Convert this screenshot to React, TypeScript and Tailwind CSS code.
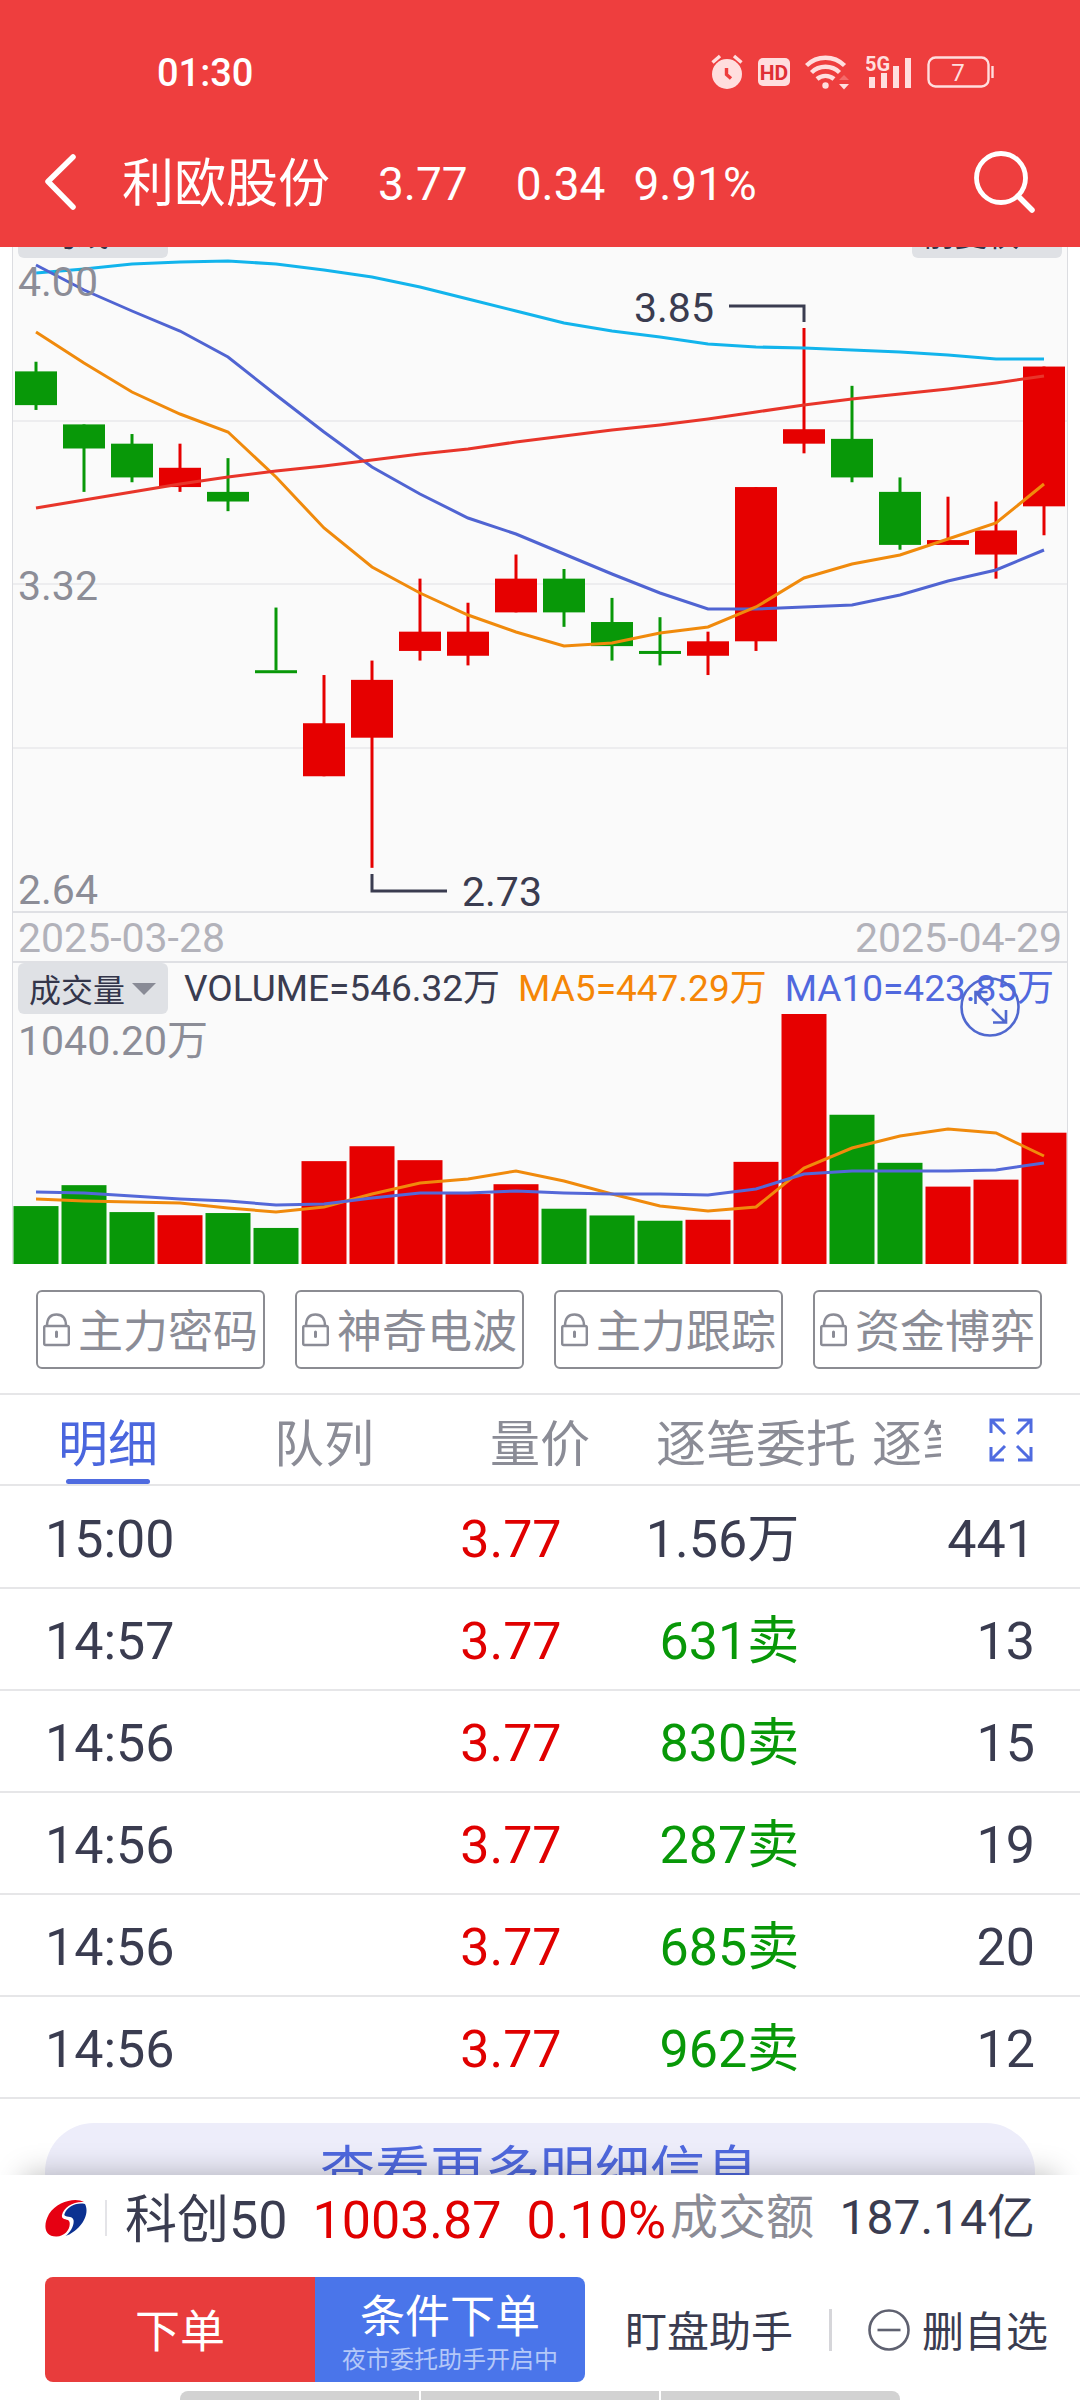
import { useState } from "react";

const UP = "#e60000";
const DOWN = "#089808";

// open, close, high, low, volume (万)
const candles = [
  [3.76, 3.69, 3.78, 3.68, 241],
  [3.65, 3.6, 3.65, 3.51, 328],
  [3.61, 3.54, 3.63, 3.53, 216],
  [3.52, 3.56, 3.61, 3.51, 203],
  [3.51, 3.49, 3.58, 3.47, 212],
  [3.14, 3.14, 3.27, 3.14, 150],
  [2.92, 3.03, 3.13, 2.92, 428],
  [3.0, 3.12, 3.16, 2.73, 490],
  [3.18, 3.22, 3.33, 3.16, 432],
  [3.17, 3.22, 3.28, 3.15, 291],
  [3.26, 3.33, 3.38, 3.26, 332],
  [3.33, 3.26, 3.35, 3.23, 230],
  [3.24, 3.19, 3.29, 3.16, 202],
  [3.18, 3.18, 3.25, 3.15, 180],
  [3.17, 3.2, 3.22, 3.13, 184],
  [3.2, 3.52, 3.52, 3.18, 425],
  [3.61, 3.64, 3.85, 3.59, 1040.2],
  [3.62, 3.54, 3.73, 3.53, 621],
  [3.51, 3.4, 3.54, 3.39, 421],
  [3.4, 3.41, 3.5, 3.4, 322],
  [3.38, 3.43, 3.49, 3.33, 351],
  [3.48, 3.77, 3.77, 3.42, 546.32],
];
const falling = [0, 1, 2, 4, 5, 11, 12, 13, 17, 18];

const priceLines = [
  {
    color: "#12b4ec",
    ys: [26, 22, 17, 15, 14, 17, 23, 30, 40, 52, 64, 76, 84, 90, 97, 100, 101, 103, 105, 108, 112, 112],
  },
  {
    color: "#5064d2",
    ys: [18, 43, 64, 84, 110, 148, 185, 220, 247, 271, 287, 307, 327, 346, 362, 362, 360, 358, 348, 334, 323, 303],
  },
  {
    color: "#f08a0c",
    ys: [85, 116, 145, 167, 185, 230, 281, 320, 346, 368, 385, 399, 396, 386, 380, 360, 331, 317, 308, 292, 276, 237],
  },
  {
    color: "#e8352a",
    ys: [261, 253, 245, 237, 230, 224, 219, 213, 207, 202, 195, 189, 183, 178, 172, 165, 158, 152, 147, 142, 136, 129],
  },
];

const volumeLines = [
  {
    color: "#f08a0c",
    ys: [185, 187, 188, 189, 194, 198, 193, 180, 169, 165, 157, 167, 180, 192, 197, 193, 154, 134, 122, 115, 119, 142],
  },
  {
    color: "#5468d8",
    ys: [178, 179, 182, 185, 187, 191, 190, 184, 179, 179, 177, 179, 180, 180, 181, 175, 160, 157, 157, 157, 156, 149],
  },
];

const tabs = ["明细", "队列", "量价", "逐笔委托", "逐笔成交"];
const locked = ["主力密码", "神奇电波", "主力跟踪", "资金博弈"];

const trades = [
  { time: "15:00", price: "3.77", volume: "1.56万", side: "", count: 441 },
  { time: "14:57", price: "3.77", volume: "631卖", side: "sell", count: 13 },
  { time: "14:56", price: "3.77", volume: "830卖", side: "sell", count: 15 },
  { time: "14:56", price: "3.77", volume: "287卖", side: "sell", count: 19 },
  { time: "14:56", price: "3.77", volume: "685卖", side: "sell", count: 20 },
  { time: "14:56", price: "3.77", volume: "962卖", side: "sell", count: 12 },
];

const cx = (i: number) => 23 + i * 48;
const py = (price: number) => 81 + (3.85 - price) * 482;
const toPoints = (ys: number[]) => ys.map((y, i) => `${cx(i)},${y}`).join(" ");

function StatusIcons() {
  return (
    <div className="flex items-center gap-[15px]">
      <svg className="h-[36px] w-[32px]" viewBox="0 0 32 36" fill="none">
        <circle cx="16" cy="20" r="15" fill="#ffdede" />
        <path d="M1.5 8.5 9 2M30.5 8.5 23 2" stroke="#ffdede" strokeWidth="3.4" />
        <path d="M15.5 14v6.5l4.5 4" stroke="#ee3e3e" strokeWidth="3.4" />
      </svg>
      <svg className="h-[30px] w-[32px]" viewBox="0 0 32 30">
        <rect y="1" width="32" height="28" rx="5" fill="#ffdede" />
        <text x="16" y="23" textAnchor="middle" fontSize="21" fontWeight="700" fill="#e02f35" fontFamily="Roboto, sans-serif">
          HD
        </text>
      </svg>
      <svg className="h-[36px] w-[46px]" viewBox="0 0 46 36" fill="none" stroke="#ffdede" strokeWidth="4.4">
        <path d="M1.5 11.5a27 27 0 0 1 38 0" />
        <path d="M6.5 18.5a20 20 0 0 1 28 0" />
        <path d="M12 25a13 13 0 0 1 17 0" />
        <circle cx="20.5" cy="31.5" r="3.2" fill="#ffdede" stroke="none" />
        <path d="M34 30h10l-5 5.5z" fill="#ffdede" stroke="none" />
        <path d="M34 26h10l-5-5z" fill="#f46a6a" stroke="none" />
      </svg>
      <svg className="h-[36px] w-[46px]" viewBox="0 0 46 36" fill="#ffdede">
        <text x="-1" y="17" fontSize="20" fontWeight="700" fontFamily="Roboto, sans-serif">
          5G
        </text>
        <rect x="3" y="23" width="6" height="11" />
        <rect x="15" y="19" width="6" height="15" />
        <rect x="27" y="12" width="6" height="22" />
        <rect x="39" y="4" width="6" height="30" />
      </svg>
      <svg className="h-[32px] w-[67px]" viewBox="0 0 67 32" fill="none">
        <rect x="1.5" y="1.5" width="60" height="29" rx="7" stroke="#ffdede" strokeWidth="2.4" />
        <path d="M65.5 10v12" stroke="#ffdede" strokeWidth="2.4" />
        <text x="31" y="24.5" textAnchor="middle" fontSize="24" fill="#ffdede" fontFamily="Roboto, sans-serif">
          7
        </text>
      </svg>
    </div>
  );
}

function LockIcon() {
  return (
    <svg className="h-[34px] w-[27px] shrink-0" viewBox="0 0 27 34" fill="none" stroke="#8b8c96" strokeWidth="2.4">
      <rect x="1.2" y="13" width="24.6" height="19" rx="1.5" />
      <path d="M4 13C4 5 8 1.5 13.5 1.5S23 5 23 13" />
      <path d="M13.5 19v4.5" strokeWidth="3" strokeLinecap="round" />
    </svg>
  );
}

function PriceChart() {
  return (
    <svg className="block w-full" viewBox="0 0 1054 664" fill="none">
      {[174, 337, 501].map((y) => (
        <path key={y} d={`M0 ${y}H1054`} stroke="#ededef" strokeWidth="2" />
      ))}
      {candles.map(([open, close, high, low], i) => {
        const color = falling.includes(i) ? DOWN : UP;
        const top = py(Math.max(open, close));
        const height = Math.max(3, py(Math.min(open, close)) - top);
        return (
          <g key={i} fill={color}>
            <rect x={cx(i) - 1.5} y={py(high)} width="3" height={py(low) - py(high)} />
            <rect x={cx(i) - 21} y={top} width="42" height={height} />
          </g>
        );
      })}
      {priceLines.map((line) => (
        <polyline key={line.color} points={toPoints(line.ys)} stroke={line.color} strokeWidth="3" />
      ))}
      <path d="M716 59h75v16" stroke="#3a3c50" strokeWidth="3" />
      <path d="M359 627v17h75" stroke="#3a3c50" strokeWidth="3" />
      <g fontSize="41" fill="#3a3c50" fontFamily="Roboto, sans-serif">
        <text x="621" y="75">3.85</text>
        <text x="449" y="659">2.73</text>
      </g>
    </svg>
  );
}

function VolumeChart() {
  return (
    <svg className="block w-full" viewBox="0 0 1054 250" fill="none">
      {candles.map((c, i) => {
        const height = (c[4] / 1040.2) * 250;
        return (
          <rect
            key={i}
            x={cx(i) - 22.5}
            y={250 - height}
            width="45"
            height={height}
            fill={falling.includes(i) ? DOWN : UP}
          />
        );
      })}
      {volumeLines.map((line) => (
        <polyline key={line.color} points={toPoints(line.ys)} stroke={line.color} strokeWidth="3" />
      ))}
    </svg>
  );
}

function Chip({ label }: { label: string }) {
  return (
    <button
      type="button"
      className="flex h-[51px] w-[150px] shrink-0 items-center justify-between rounded-md bg-[#dfe1e5] pr-3 pl-1 text-[32px] leading-none text-[#33354a]"
    >
      <span className="flex-1 pt-1 text-center">{label}</span>
      <svg className="h-[12px] w-[24px]" viewBox="0 0 24 12">
        <path d="M0 0h24L12 12z" fill="#898b96" />
      </svg>
    </button>
  );
}

export default function App() {
  const [activeTab, setActiveTab] = useState("明细");

  return (
    <div className="flex h-screen flex-col overflow-hidden bg-white font-[Roboto,'Noto_Sans_CJK_SC',sans-serif] text-[#3a3c50]">
      <header className="shrink-0 bg-[#ee3e3e] pb-[27px] text-white">
        <div className="flex h-36 items-center justify-between pr-[86px] pl-[157px]">
          <span className="pt-[2px] text-[38px] leading-none font-medium">01:30</span>
          <StatusIcons />
        </div>
        <div className="flex h-[76px] items-center pr-11 pl-[42px] text-[46px] leading-none">
          <button type="button" aria-label="返回" className="mr-11">
            <svg className="h-[56px] w-[36px]" viewBox="0 0 36 56" fill="none" stroke="white" strokeWidth="5.5" strokeLinecap="round" strokeLinejoin="round">
              <path d="M31 3 6 27.5 31 53" />
            </svg>
          </button>
          <h1 className="pt-[6px] text-[52px] leading-none">利欧股份</h1>
          <span className="ml-12 pt-1">3.77</span>
          <span className="ml-12 pt-1">0.34</span>
          <span className="ml-7 pt-1">9.91%</span>
          <button type="button" aria-label="搜索" className="ml-auto">
            <svg className="h-[62px] w-[62px]" viewBox="0 0 62 62" fill="none" stroke="white" strokeWidth="4.8" strokeLinecap="round">
              <circle cx="27" cy="27" r="24.5" />
              <path d="m44 45 14 14" strokeWidth="5.5" />
            </svg>
          </button>
        </div>
      </header>

      <main className="min-h-0 flex-1 overflow-hidden">
        <section className="mx-3 border-x border-[#dcdde1] bg-[#fafafa]">
          <div className="relative">
            <PriceChart />
            <div className="absolute inset-x-[5px] -top-10 flex justify-between">
              <Chip label="均线" />
              <Chip label="前复权" />
            </div>
            <div className="pointer-events-none absolute inset-0 flex flex-col justify-between px-[5px] pt-[14px] text-[41px] leading-[42px] text-[#8c8d97]">
              <span>4.00</span>
              <span>3.32</span>
              <span>2.64</span>
            </div>
          </div>
          <div className="flex h-[52px] items-center justify-between border-y-2 border-[#dfe0e4] px-[5px] pt-[2px] text-[41px] leading-none text-[#b2b2ba]">
            <span>2025-03-28</span>
            <span>2025-04-29</span>
          </div>
          <div className="relative">
            <div className="flex h-[51px] items-center px-[5px] text-[37px] leading-none whitespace-nowrap">
              <Chip label="成交量" />
              <span className="ml-4">VOLUME=546.32万</span>
              <span className="ml-[18px] text-[#f58606]">MA5=447.29万</span>
              <span className="ml-[18px] text-[#5068de]">MA10=423.85万</span>
            </div>
            <span className="absolute top-[57px] left-[5px] text-[41px] leading-[42px] text-[#8c8d97]">
              1040.20万
            </span>
            <VolumeChart />
            <button type="button" aria-label="放大图表" className="absolute top-[14px] right-[47px]">
              <svg className="h-[60px] w-[60px]" viewBox="0 0 60 60" fill="none" stroke="#5068cf" strokeWidth="2.6">
                <circle cx="30" cy="30" r="28.5" />
                <path d="M28 28 16 15.5M15.5 27V15h12M32 32l13 13M46 33v12.5H33" />
              </svg>
            </button>
          </div>
        </section>

        <section className="grid grid-cols-4 gap-[30px] pt-[26px] pr-[38px] pb-6 pl-9">
          {locked.map((name) => (
            <button
              key={name}
              type="button"
              className="flex h-[79px] items-center justify-center gap-2 rounded-md border-2 border-[#8b8c92] text-[45px] leading-none whitespace-nowrap text-[#8b8c96]"
            >
              <LockIcon />
              <span className="pt-[6px]">{name}</span>
            </button>
          ))}
        </section>

        <nav className="flex h-[93px] items-stretch border-y-2 border-[#e6e6e8]">
          <div className="flex min-w-0 flex-1 overflow-hidden">
            {tabs.map((tab) => (
              <button
                key={tab}
                type="button"
                onClick={() => setActiveTab(tab)}
                className={
                  tab === activeTab
                    ? "flex w-[216px] shrink-0 flex-col items-center justify-end text-[50px] leading-[68px] text-[#4a66de]"
                    : "flex w-[216px] shrink-0 flex-col items-center justify-end text-[50px] leading-[68px] text-[#8b8c96]"
                }
              >
                {tab}
                <span className={tab === activeTab ? "h-[5px] w-[84px] rounded-full bg-[#4f6be0]" : "h-[5px]"} />
              </button>
            ))}
          </div>
          <button type="button" aria-label="全屏" className="flex w-[139px] items-center justify-center">
            <svg className="h-[44px] w-[44px]" viewBox="0 0 44 44" fill="none" stroke="#4f6be0" strokeWidth="3">
              <path d="M2 15V2h13M2 2l14 14M29 2h13v13M42 2 28 16M2 29v13h13M2 42l14-14M29 42h13V29M42 42 28 28" />
            </svg>
          </button>
        </nav>

        <table className="w-full table-fixed text-[52px] leading-none">
          <tbody>
            {trades.map((trade, i) => (
              <tr key={i} className="h-[102px] border-b-2 border-[#e6e6e8]">
                <td className="w-[22%] pt-[6px] pl-[45px]">{trade.time}</td>
                <td className="w-[30%] pt-[6px] text-right text-[#e00000]">{trade.price}</td>
                <td className={trade.side === "sell" ? "w-[22%] pt-[6px] text-right text-[#089808]" : "w-[22%] pt-[6px] text-right"}>
                  {trade.volume}
                </td>
                <td className="pt-[6px] pr-[45px] text-right">{trade.count}</td>
              </tr>
            ))}
          </tbody>
        </table>

        <div className="px-[45px] pt-6">
          <button type="button" className="h-[98px] w-full rounded-full bg-[#ededfa] text-[55px] leading-none text-[#4f68de]">
            查看更多明细信息
          </button>
        </div>
      </main>

      <footer className="relative shrink-0 bg-white shadow-[0_-24px_28px_-24px_rgba(0,0,0,0.28)]">
        <div className="flex h-[102px] items-center px-[45px] pb-4 text-[52px] leading-none whitespace-nowrap">
          <svg className="h-[38px] w-[42px]" viewBox="0 0 42 38">
            <path d="M39 3C31-2 12 2 4 15-2 26-1 37 11 37.5c9 .4 15-8 13.5-14.5C23.5 19 16 22 17 16 18.5 8 29 2 39 3z" fill="#e60012" />
            <path d="M40 5C31 3 22 8 19.5 15c-1.5 4 8 1 9 6 1 5-3 12-8 16C33 33 46 17 40 5z" fill="#0b3191" />
          </svg>
          <span className="ml-[18px] h-9 w-[2px] bg-[#e4e4e8]" />
          <span className="ml-[18px] pt-[6px]">科创50</span>
          <span className="ml-[25px] pt-[6px] text-[#e00000]">1003.87</span>
          <span className="ml-[25px] pt-[6px] text-[#e00000]">0.10%</span>
          <span className="ml-1 text-[48px] text-[#8b8c96]">成交额</span>
          <span className="ml-auto text-[48px]">187.14亿</span>
        </div>
        <div className="flex h-[105px] items-stretch pr-8 pl-[45px]">
          <button type="button" className="w-[270px] rounded-l-lg bg-[#e83c3c] pt-[6px] text-[45px] leading-none text-white">
            下单
          </button>
          <button type="button" className="flex w-[270px] flex-col items-center justify-center gap-2 rounded-r-lg bg-[#4a75ea] pt-2 text-[45px] leading-none text-white">
            条件下单
            <span className="text-[24px] leading-none text-[#b4c8f8]">夜市委托助手开启中</span>
          </button>
          <div className="flex flex-1 items-center justify-between pl-10 text-[42px] leading-none whitespace-nowrap">
            <button type="button" className="pt-[6px]">盯盘助手</button>
            <span className="h-[42px] w-[3px] bg-[#d6d6da]" />
            <button type="button" className="flex items-center gap-3">
              <svg className="h-[42px] w-[42px]" viewBox="0 0 42 42" fill="none" stroke="#5f6170" strokeWidth="2.6">
                <circle cx="21" cy="21" r="19.5" />
                <path d="M9.5 21h23" />
              </svg>
              <span className="pt-[6px]">删自选</span>
            </button>
          </div>
        </div>
        <div className="mx-auto mt-[9px] flex h-[9px] w-2/3 gap-[2px] overflow-hidden rounded-t-lg">
          <span className="flex-1 bg-[#d2d2d2]" />
          <span className="flex-1 bg-[#d2d2d2]" />
          <span className="flex-1 bg-[#d2d2d2]" />
        </div>
      </footer>
    </div>
  );
}
